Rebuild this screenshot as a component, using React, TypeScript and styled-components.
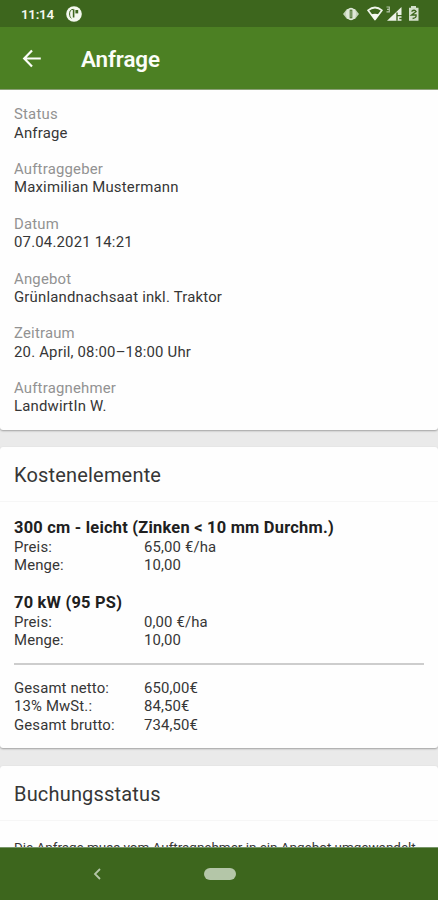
import React from "react";
import styled, { createGlobalStyle } from "styled-components";

const GlobalStyle = createGlobalStyle`
  html, body, #root { height: 100%; }
  body { margin: 0; overflow: hidden; background: #eaeaea; }
  * { box-sizing: border-box; }
`;

const Screen = styled.div`
  display: flex;
  flex-direction: column;
  width: 100%;
  height: 900px;
  overflow: hidden;
  background: #eaeaea;
  color: #363636;
  font-family: Roboto, "Liberation Sans", sans-serif;
  font-size: 14.9px;
  line-height: 18.25px;
  letter-spacing: 0.14px;
`;

const StatusBar = styled.div`
  flex: none;
  display: flex;
  align-items: center;
  height: 27px;
  padding: 1px 18px 0 21px;
  background: #3d661d;
  color: #f4f8ef;
`;

const Clock = styled.span`
  width: 45px;
  padding-top: 2px;
  font-size: 13.4px;
  font-weight: 600;
  letter-spacing: -0.3px;
`;

const StatusIcons = styled.div`
  display: flex;
  align-items: center;
  margin-left: auto;
  svg { display: block; }
`;

const AppBar = styled.header`
  flex: none;
  display: flex;
  align-items: center;
  height: 63px;
  padding: 1px 20px 0 22px;
  background: #4c8023;
  color: #fbfdf8;
  border-bottom: 1px solid #8ba077;
`;

const BackButton = styled.button`
  display: flex;
  width: 59px;
  padding: 0;
  border: 0;
  background: none;
  color: inherit;
`;

const Title = styled.h1`
  margin: 1px 0 0;
  font-size: 22.4px;
  font-weight: 600;
  line-height: 28px;
  letter-spacing: -0.1px;
`;

const Content = styled.main`
  flex: 1;
  min-height: 0;
  overflow: hidden;
  display: flex;
  flex-direction: column;
  gap: 17.5px;
`;

const Card = styled.section<{ $height: number; $first?: boolean }>`
  flex: none;
  height: ${(p) => p.$height}px;
  background: #fefefe;
  border-radius: ${(p) => (p.$first ? "0 0 3px 3px" : "3px")};
  box-shadow: 0 1px 2px rgba(0, 0, 0, 0.32);
`;

const FieldList = styled.dl`
  display: flex;
  flex-direction: column;
  gap: 18.25px;
  margin: 0;
  padding: 15.4px 14px 0;
  letter-spacing: 0.2px;
`;

const Label = styled.dt`
  color: #929292;
`;

const Value = styled.dd`
  margin: 0;
`;

const CardTitle = styled.h2`
  margin: 0;
  height: 55px;
  padding: 0 14px;
  border-bottom: 1px solid #f6f6f6;
  font-size: 20px;
  font-weight: 400;
  line-height: 56px;
  letter-spacing: 0.18px;
`;

const CardBody = styled.div`
  padding: 15.5px 14px 0;
`;

const CostItem = styled.div`
  margin-bottom: 18.5px;
`;

const ItemName = styled.h3`
  margin: 0;
  font-size: 16.4px;
  font-weight: 700;
  line-height: 20px;
  letter-spacing: 0.24px;
  color: #202020;
`;

const Row = styled.div`
  display: grid;
  grid-template-columns: 130px 1fr;
`;

const Rule = styled.hr`
  height: 2px;
  margin: -5px 0 14.5px;
  border: 0;
  background: #cdcdcd;
`;

const Message = styled.p`
  margin: 3px 0 0;
  font-size: 13.45px;
  letter-spacing: 0;
  white-space: nowrap;
`;

const NavBar = styled.nav`
  flex: none;
  display: grid;
  grid-template-columns: 194px 51px 1fr;
  align-items: center;
  justify-items: center;
  height: 53px;
  background: #3d661d;
  border-top: 1px solid #78966a;
`;

const HomePill = styled.div`
  width: 32px;
  height: 12px;
  border-radius: 6px;
  background: #b4c6a8;
`;

const fields = [
  ["Status", "Anfrage"],
  ["Auftraggeber", "Maximilian Mustermann"],
  ["Datum", "07.04.2021 14:21"],
  ["Angebot", "Grünlandnachsaat inkl. Traktor"],
  ["Zeitraum", "20. April, 08:00–18:00 Uhr"],
  ["Auftragnehmer", "LandwirtIn W."],
];

const items = [
  { name: "300 cm - leicht (Zinken < 10 mm Durchm.)", price: "65,00 €/ha", amount: "10,00" },
  { name: "70 kW (95 PS)", price: "0,00 €/ha", amount: "10,00" },
];

const totals = [
  ["Gesamt netto:", "650,00€"],
  ["13% MwSt.:", "84,50€"],
  ["Gesamt brutto:", "734,50€"],
];

function AppNotificationIcon() {
  return (
    <svg width="16" height="16" viewBox="0 0 16 16">
      <circle cx="8" cy="8" r="7.8" fill="#f4f8ef" />
      <path d="M7.2 3.3C4.2 3.5 3.6 5.5 3.6 8c0 2 .6 3.6 1.8 4.3" fill="none" stroke="#3d661d" strokeWidth="1" />
      <path d="M6.8 3.3h1.6v8.2H6.800z" fill="#3d661d" />
      <path d="M9.4 4h2.8v3.400H9.400z" fill="#3d661d" />
    </svg>
  );
}

function SystemIcons() {
  return (
    <svg width="78" height="18" viewBox="342 5 78 18">
      <path d="M343 14l4-5h8l4 5-4 5h-8z" fill="#c3d2b8" />
      <ellipse cx="351" cy="14" rx="5" ry="6.2" fill="#dfe8d8" />
      <path d="M351 9.7v8.6" stroke="#3d661d" strokeWidth="2.6" />
      <path d="M351 10.5v7" stroke="#b4c6a8" strokeWidth="1" />
      <path d="M368 10.3q7-5.600 14 0l-7 9.200z" fill="none" stroke="#f0f5eb" strokeWidth="1.7" strokeLinejoin="round" />
      <path d="M370.8 14.6q4.200-1.500 8.400 0l-4.200 5.400z" fill="#f4f8ef" />
      <path d="M386.500 7h2.800v4.800h-2.800M387 9.400h2" fill="none" stroke="#b4c6a8" strokeWidth="1.2" />
      <path d="M387 20.8L401.500 7v13.800z" fill="#edf3e8" />
      <path d="M397 12.500v8.300M397 15.600h5M399.300 18.500h2.700" stroke="#3d661d" strokeWidth="1.4" />
      <path d="M411 6h5v1.800h2.500v13h-9.500v-13h2z" fill="#d3dfca" />
      <path d="M411.500 11.500q3-2.500 4.600 0l-4.600 3.500h4.600q.5 3-3.500 3.500" fill="none" stroke="#3d661d" strokeWidth="1.3" />
    </svg>
  );
}

export default function App() {
  return (
    <>
      <GlobalStyle />
      <Screen>
        <StatusBar>
          <Clock>11:14</Clock>
          <AppNotificationIcon />
          <StatusIcons>
            <SystemIcons />
          </StatusIcons>
        </StatusBar>
        <AppBar>
          <BackButton aria-label="Zurück">
            <svg width="20" height="20" viewBox="0 0 20 20" fill="none" stroke="currentColor" strokeWidth="2.2">
              <path d="M18.8 9.5H3M10 1.5l-7.800 8 7.800 8" />
            </svg>
          </BackButton>
          <Title>Anfrage</Title>
        </AppBar>
        <Content>
          <Card $height={339.5} $first>
            <FieldList>
              {fields.map(([label, value]) => (
                <div key={label}>
                  <Label>{label}</Label>
                  <Value>{value}</Value>
                </div>
              ))}
            </FieldList>
          </Card>
          <Card $height={301}>
            <CardTitle>Kostenelemente</CardTitle>
            <CardBody>
              {items.map((item) => (
                <CostItem key={item.name}>
                  <ItemName>{item.name}</ItemName>
                  <Row>
                    <span>Preis:</span>
                    <span>{item.price}</span>
                  </Row>
                  <Row>
                    <span>Menge:</span>
                    <span>{item.amount}</span>
                  </Row>
                </CostItem>
              ))}
              <Rule />
              {totals.map(([label, value]) => (
                <Row key={label}>
                  <span>{label}</span>
                  <span>{value}</span>
                </Row>
              ))}
            </CardBody>
          </Card>
          <Card $height={120}>
            <CardTitle>Buchungsstatus</CardTitle>
            <CardBody>
              <Message>Die Anfrage muss vom Auftragnehmer in ein Angebot umgewandelt</Message>
            </CardBody>
          </Card>
        </Content>
        <NavBar>
          <svg width="10" height="14" viewBox="0 0 10 14" fill="none" stroke="#b4c6a8" strokeWidth="1.8">
            <path d="M8 2L3 7l5 5" />
          </svg>
          <HomePill />
        </NavBar>
      </Screen>
    </>
  );
}
